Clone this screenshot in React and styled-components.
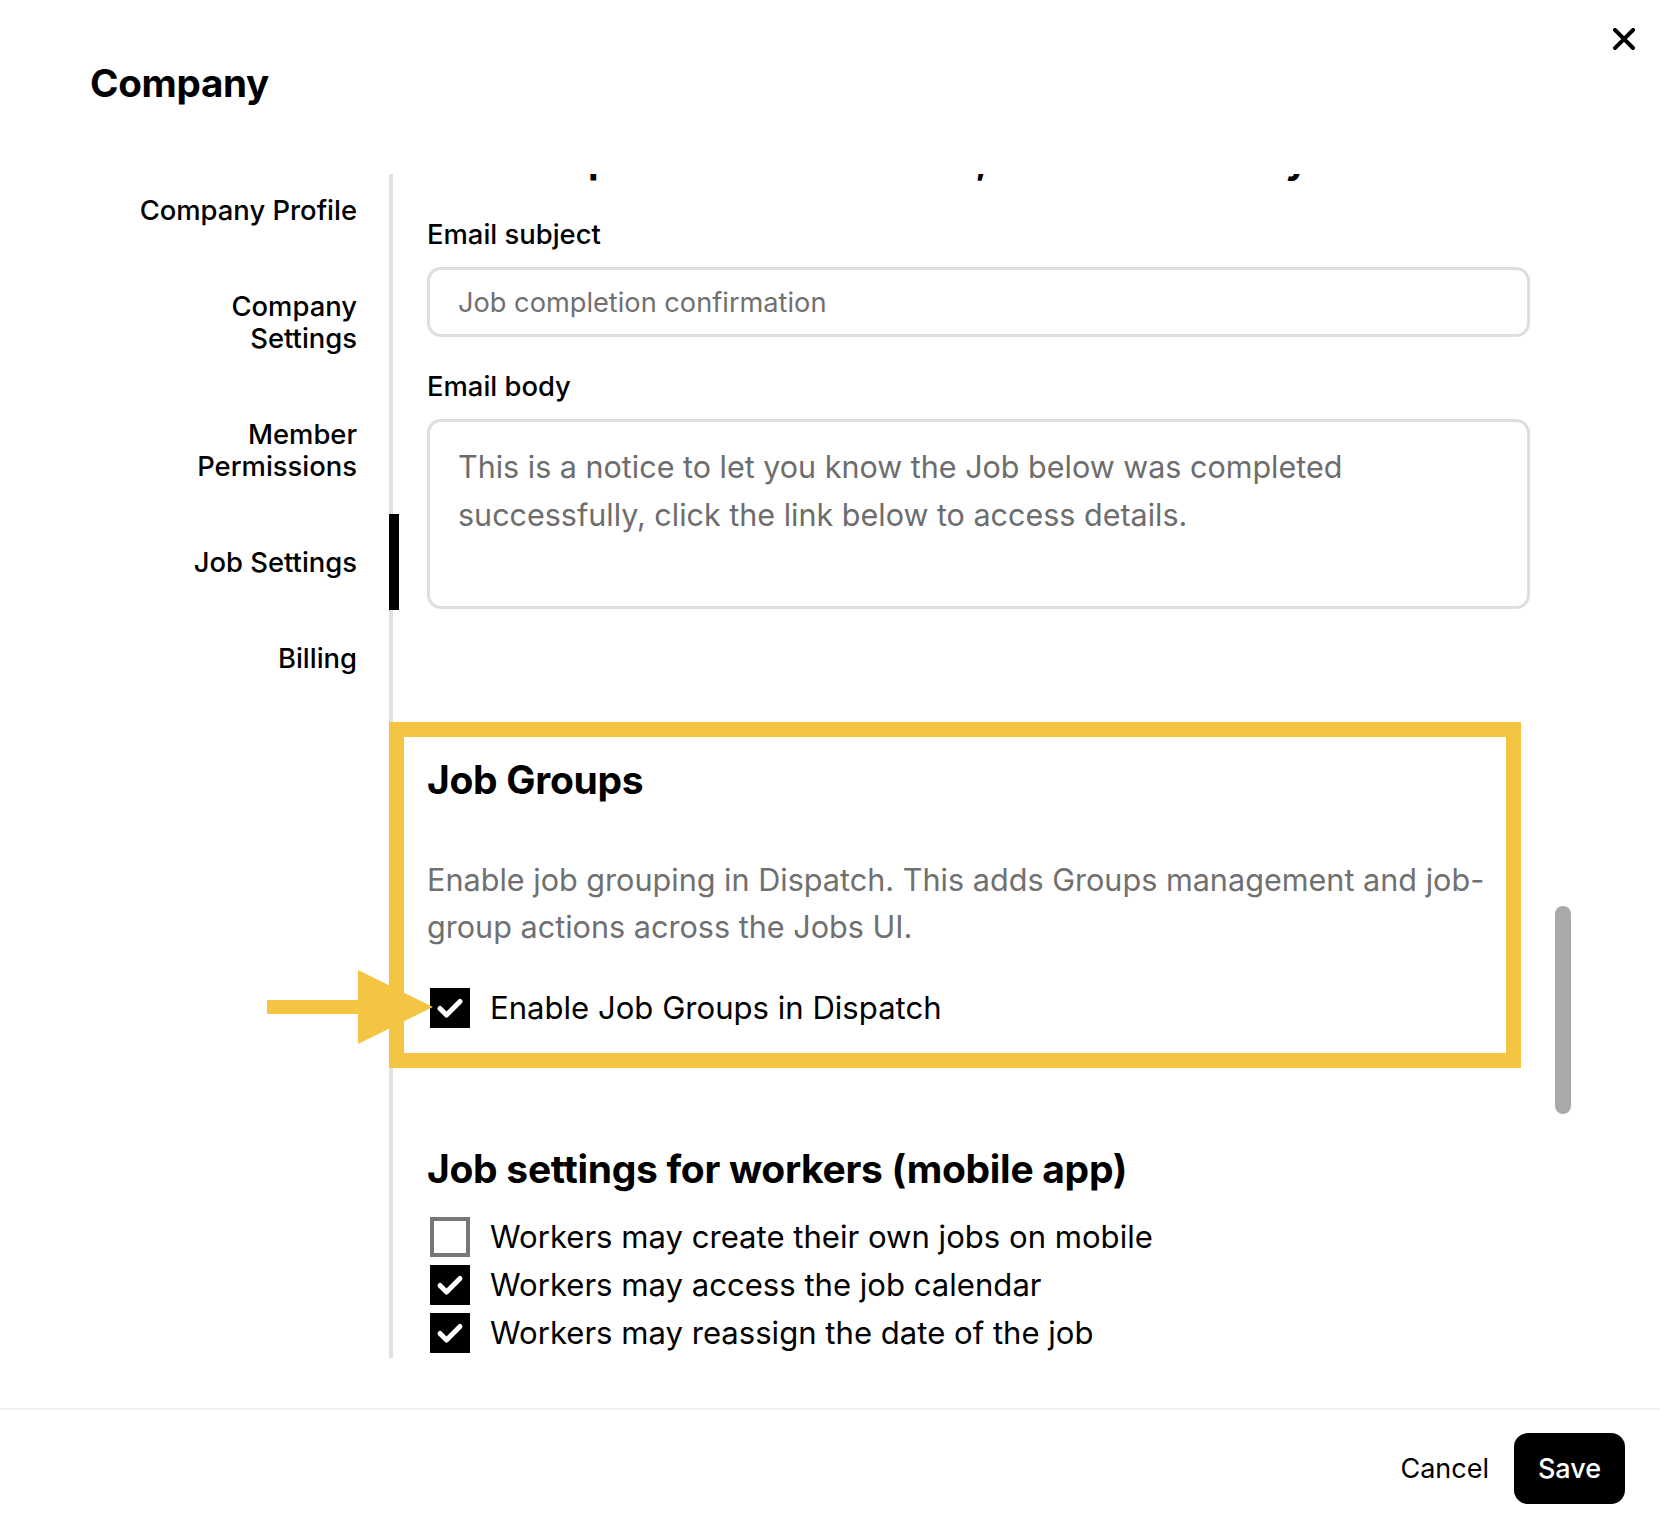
import React from "react";
import styled, { createGlobalStyle } from "styled-components";

const GlobalStyle = createGlobalStyle`
  * {
    box-sizing: border-box;
  }

  body {
    margin: 0;
    background: #fff;
    font-family: Inter, "Noto Sans", "Liberation Sans", sans-serif;
    color: #000;
  }
`;

const Modal = styled.div`
  position: relative;
  width: 1660px;
  height: 1518px;
  display: flex;
  flex-direction: column;
  background: #fff;
  overflow: hidden;
`;

const Header = styled.div`
  padding: 60px 0 56px 90px;
`;

const Title = styled.h1`
  margin: 0;
  font-size: 38.6px;
  line-height: 46px;
  font-weight: 700;
  letter-spacing: -0.3px;
`;

const CloseButton = styled.button`
  position: absolute;
  top: 28px;
  right: 25px;
  width: 22px;
  height: 22px;
  padding: 0;
  border: none;
  background: none;
  cursor: pointer;
  display: flex;
`;

const Body = styled.div`
  display: flex;
  align-items: flex-start;
  height: 1246px;
`;

const Nav = styled.nav`
  width: 389px;
  flex-shrink: 0;
  display: flex;
  flex-direction: column;
  position: relative;
  z-index: 2;
`;

const NavItem = styled.div`
  position: relative;
  padding: 32px 32px 32px 0;
  text-align: right;
  font-size: 27.4px;
  line-height: 32px;
  font-weight: 500;
  color: #000;
  cursor: pointer;

  &::after {
    content: "";
    display: ${(p) => (p.$active ? "block" : "none")};
    position: absolute;
    top: 0;
    bottom: 0;
    right: -10px;
    width: 10px;
    background: #000;
  }
`;

const Panel = styled.div`
  position: relative;
  width: 1201px;
  height: 1184px;
  margin-top: 12px;
  border-left: 4px solid #e2e2e2;
  padding: 0 60px 0 34px;
  clip-path: inset(0 -300px 0 -300px);
`;

const ScrollThumb = styled.div`
  position: absolute;
  right: 19px;
  top: 732px;
  width: 16px;
  height: 208px;
  border-radius: 8px;
  background: #a9a9a9;
`;

const SectionHeading = styled.h2`
  margin: ${(p) => p.$mt || 0}px 0 0;
  font-size: 39px;
  line-height: 44px;
  font-weight: 700;
  letter-spacing: -0.3px;
  white-space: nowrap;
`;

const FieldLabel = styled.div`
  margin-top: ${(p) => p.$mt}px;
  font-size: 27.4px;
  line-height: 32px;
  font-weight: 500;
`;

const TextInput = styled.div`
  margin-top: 17px;
  height: 70px;
  border: 3px solid #dedede;
  border-radius: 14px;
  padding: 0 28px;
  display: flex;
  align-items: center;
  font-size: 27.2px;
  color: #707070;
`;

const TextArea = styled.div`
  margin-top: 17px;
  height: 190px;
  border: 3px solid #dedede;
  border-radius: 14px;
  padding: 21px 28px;
  font-size: 30.5px;
  line-height: 48px;
  color: #6d6d6d;
`;

const GroupSection = styled.section`
  position: relative;
  margin-top: 149px;
`;

const Highlight = styled.div`
  position: absolute;
  left: -38px;
  top: -36px;
  width: 1132px;
  height: 346px;
  border: 15px solid #f4c542;
  pointer-events: none;
`;

const Description = styled.p`
  margin: 54px 0 0;
  font-size: 30.6px;
  line-height: 47px;
  color: #707070;
`;

const CheckRow = styled.label`
  position: relative;
  display: flex;
  align-items: center;
  gap: 20px;
  height: ${(p) => p.$h}px;
  margin-top: ${(p) => p.$mt || 0}px;
  padding-left: 3px;
  font-size: 31.1px;
  color: #000;
  cursor: pointer;
`;

const Box = styled.span`
  width: 40px;
  height: 40px;
  flex-shrink: 0;
  display: flex;
  align-items: center;
  justify-content: center;
  background: ${(p) => (p.$checked ? "#000" : "#fff")};
  border: ${(p) => (p.$checked ? "none" : "4px solid #777")};
`;

const Arrow = styled.svg`
  position: absolute;
  left: -160px;
  top: -18px;
`;

const RowList = styled.div`
  margin-top: 22px;
  display: flex;
  flex-direction: column;
`;

const Footer = styled.div`
  border-top: 2px solid #efefef;
  padding: 23px 35px 0;
  display: flex;
  justify-content: flex-end;
  align-items: center;
  gap: 25px;
`;

const CancelButton = styled.button`
  border: none;
  background: none;
  padding: 0;
  font-family: inherit;
  font-size: 27px;
  color: #000;
  cursor: pointer;
`;

const SaveButton = styled.button`
  width: 111px;
  height: 71px;
  border: none;
  border-radius: 14px;
  background: #000;
  color: #fff;
  font-family: inherit;
  font-size: 27px;
  font-weight: 500;
  cursor: pointer;
`;

const Checkbox = ({ checked }) => (
  <Box $checked={checked}>
    {checked && (
      <svg width="40" height="40" viewBox="0 0 40 40">
        <path
          d="M10 20.5 L16.5 27 L30 13.5"
          fill="none"
          stroke="#fff"
          strokeWidth="5"
          strokeLinecap="round"
          strokeLinejoin="round"
        />
      </svg>
    )}
  </Box>
);

const navItems = [
  ["Company Profile"],
  ["Company", "Settings"],
  ["Member", "Permissions"],
  ["Job Settings"],
  ["Billing"],
];

const workerOptions = [
  { label: "Workers may create their own jobs on mobile", checked: false },
  { label: "Workers may access the job calendar", checked: true },
  { label: "Workers may reassign the date of the job", checked: true },
];

const App = () => {
  return (
    <Modal>
      <GlobalStyle />
      <CloseButton aria-label="Close">
        <svg width="22" height="22" viewBox="0 0 22 22">
          <path d="M2 2 L20 20 M20 2 L2 20" stroke="#000" strokeWidth="4" strokeLinecap="square" />
        </svg>
      </CloseButton>

      <Header>
        <Title>Company</Title>
      </Header>

      <Body>
        <Nav>
          {navItems.map((lines) => (
            <NavItem key={lines.join(" ")} $active={lines[0] === "Job Settings"}>
              {lines.map((l, i) => (
                <div key={i}>{l}</div>
              ))}
            </NavItem>
          ))}
        </Nav>

        <Panel>
          <SectionHeading $mt={-37}>Job completion email notices, sent on their day</SectionHeading>

          <FieldLabel $mt={37}>Email subject</FieldLabel>
          <TextInput>Job completion confirmation</TextInput>

          <FieldLabel $mt={33}>Email body</FieldLabel>
          <TextArea>
            This is a notice to let you know the Job below was completed
            <br />
            successfully, click the link below to access details.
          </TextArea>

          <GroupSection>
            <Highlight />
            <SectionHeading>Job Groups</SectionHeading>
            <Description>
              Enable job grouping in Dispatch. This adds Groups management and job-
              <br />
              group actions across the Jobs UI.
            </Description>
            <CheckRow $h={40} $mt={38}>
              <Arrow width="166" height="74" viewBox="0 0 166 74">
                <rect x="0" y="30" width="96" height="14" fill="#f4c542" />
                <polygon points="91,0 166,37 91,74" fill="#f4c542" />
              </Arrow>
              <Checkbox checked />
              Enable Job Groups in Dispatch
            </CheckRow>
          </GroupSection>

          <SectionHeading $mt={119}>Job settings for workers (mobile app)</SectionHeading>
          <RowList>
            {workerOptions.map((o) => (
              <CheckRow key={o.label} $h={48}>
                <Checkbox checked={o.checked} />
                {o.label}
              </CheckRow>
            ))}
          </RowList>

          <ScrollThumb />
        </Panel>
      </Body>

      <Footer>
        <CancelButton>Cancel</CancelButton>
        <SaveButton>Save</SaveButton>
      </Footer>
    </Modal>
  );
};

export default App;
